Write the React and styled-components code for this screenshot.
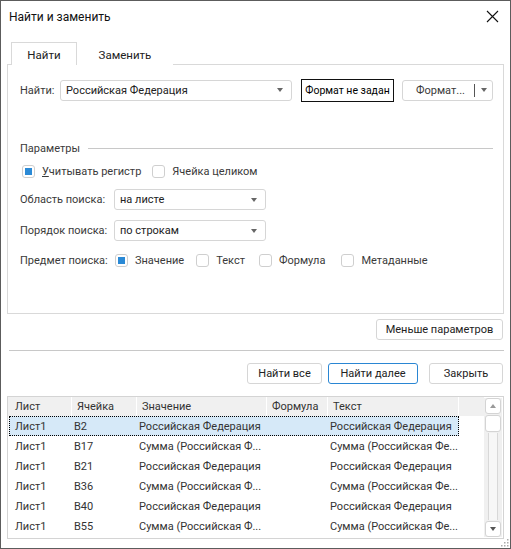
import styled, { createGlobalStyle } from "styled-components";

const GlobalStyle = createGlobalStyle`
  html, body {
    margin: 0;
    padding: 0;
    background: #3a3a3a;
  }
  body {
    font-family: Roboto, "Noto Sans", sans-serif;
    font-size: 11px;
    color: #3a3a3a;
  }
  * {
    box-sizing: border-box;
  }
`;

const Dialog = styled.div`
  width: 511px;
  height: 549px;
  background: #fff;
  border: 1px solid #5c5c5c;
  display: flex;
  flex-direction: column;
  position: relative;
`;

const TitleBar = styled.div`
  height: 31px;
  display: flex;
  align-items: center;
  justify-content: space-between;
  padding: 0 8px 0 8px;
  color: #111;
  font-size: 12px;
`;

const CloseButton = styled.button`
  border: none;
  background: none;
  padding: 0;
  width: 16px;
  height: 16px;
  display: flex;
  align-items: center;
  justify-content: center;
  margin-right: 2px;
`;

const Body = styled.div`
  padding: 0 6px 0 6px;
  display: flex;
  flex-direction: column;
`;

const Tabs = styled.div`
  display: flex;
  margin-top: 10px;
  padding-left: 4px;
  position: relative;
  z-index: 1;
  margin-bottom: -1px;
`;

const Tab = styled.div`
  height: 23px;
  width: ${(p) => (p.$active ? "66px" : "96px")};
  display: flex;
  align-items: center;
  justify-content: center;
  padding-top: 1px;
  background: #fff;
  border: 1px solid ${(p) => (p.$active ? "#d9d9d9" : "transparent")};
  border-bottom: none;
  color: #222;
  font-size: 11.5px;
`;

const Panel = styled.div`
  height: 250px;
  border: 1px solid #d9d9d9;
  padding: 14px 10px 0 12px;
  display: flex;
  flex-direction: column;
`;

const Row = styled.div`
  display: flex;
  align-items: center;
  height: ${(p) => p.$h || 14}px;
  margin-top: ${(p) => p.$mt || 0}px;
`;

const Label = styled.span`
  width: ${(p) => (p.$w ? `${p.$w}px` : "auto")};
  flex-shrink: 0;
  white-space: nowrap;
`;

const Combo = styled.div`
  width: ${(p) => p.$w}px;
  height: 21px;
  border: 1px solid #d6d6d6;
  border-radius: 3px;
  display: flex;
  align-items: center;
  justify-content: space-between;
  padding: 0 8px 0 5px;
  color: #222;
  background: #fff;
`;

const Arrow = styled.span`
  width: 0;
  height: 0;
  border-left: 3.5px solid transparent;
  border-right: 3.5px solid transparent;
  border-top: 4px solid #666;
`;

const FormatBox = styled.div`
  margin-left: 9px;
  width: 93px;
  height: 23px;
  border: 1px solid #111;
  display: flex;
  align-items: center;
  justify-content: center;
  font-size: 10.5px;
  color: #000;
`;

const SplitButton = styled.div`
  margin-left: 8px;
  width: 91px;
  height: 21px;
  border: 1px solid #d6d6d6;
  border-radius: 3px;
  display: flex;
  align-items: center;
`;

const SplitMain = styled.span`
  flex: 1;
  text-align: center;
  padding-left: 4px;
`;

const SplitDrop = styled.span`
  width: 18px;
  height: 13px;
  border-left: 1px solid #555;
  display: flex;
  align-items: center;
  justify-content: center;
`;

const SectionHeader = styled.div`
  display: flex;
  align-items: center;
  gap: 8px;
  height: 14px;
  margin-top: 40px;
  &::after {
    content: "";
    flex: 1;
    height: 1px;
    background: #c8c8c8;
  }
`;

const Check = styled.span`
  width: 13px;
  height: 13px;
  border: 1px solid #cfcfcf;
  border-radius: 3px;
  background: #fff;
  margin-left: ${(p) => p.$ml || 0}px;
  margin-right: 7px;
  flex-shrink: 0;
  display: flex;
  align-items: center;
  justify-content: center;
  &::after {
    content: "";
    width: 7px;
    height: 7px;
    background: ${(p) => (p.$checked ? "#2b8ad6" : "transparent")};
  }
`;

const Underline = styled.span`
  text-decoration: underline;
`;

const RightRow = styled.div`
  display: flex;
  justify-content: flex-end;
  margin-top: ${(p) => p.$mt}px;
  padding-right: ${(p) => p.$pr || 0}px;
`;

const Button = styled.button`
  font: inherit;
  color: #222;
  height: 21px;
  width: ${(p) => p.$w}px;
  margin-left: ${(p) => p.$ml || 0}px;
  background: #fff;
  border: 1px solid ${(p) => (p.$primary ? "#2a86d3" : "#d6d6d6")};
  border-radius: 3px;
  padding: 0;
`;

const Separator = styled.div`
  height: 1px;
  background: #c8c8c8;
  margin: 10px 0 0 2px;
`;

const Grid = styled.div`
  margin-top: 12px;
  height: 143px;
  border: 1px solid #d4d4d4;
  display: flex;
  position: relative;
`;

const GridBody = styled.div`
  flex: 1;
  display: flex;
  flex-direction: column;
`;

const HeaderRow = styled.div`
  display: flex;
  height: 19px;
  background: #f0f0f0;
`;

const HeaderCell = styled.div`
  width: ${(p) => p.$w}px;
  flex-shrink: 0;
  padding-left: ${(p) => (p.$first ? 7 : 5)}px;
  display: flex;
  align-items: center;
  border-right: 1px solid #fff;
  color: #333;
  &:last-child {
    flex: 1;
    border-right: none;
  }
`;

const DataRow = styled.div`
  display: flex;
  height: 20px;
  margin-left: 1px;
  width: 450px;
  background: ${(p) => (p.$selected ? "#d6e9f8" : "transparent")};
  outline: ${(p) => (p.$selected ? "1px dotted #000" : "none")};
  outline-offset: -1px;
`;

const Cell = styled.div`
  width: ${(p) => p.$w}px;
  flex-shrink: 0;
  padding-left: ${(p) => (p.$first ? 6 : 2)}px;
  display: flex;
  align-items: center;
  white-space: nowrap;
  overflow: hidden;
  color: #333;
`;

const ScrollBar = styled.div`
  width: 18px;
  margin: 1px 1px 1px 0;
  background: #f0f0f0;
  display: flex;
  flex-direction: column;
  align-items: center;
  padding: 0 1px;
`;

const ScrollBtn = styled.div`
  width: 16px;
  height: 16px;
  background: #fff;
  border: 1px solid #d4d4d4;
  border-radius: 3px;
  display: flex;
  align-items: center;
  justify-content: center;
  flex-shrink: 0;
`;

const Thumb = styled.div`
  width: 16px;
  height: 17px;
  margin-top: 1px;
  background: #fff;
  border: 1px solid #d4d4d4;
  border-radius: 3px;
`;

const Track = styled.div`
  flex: 1;
  width: 10px;
  border-left: 1px solid #d8d8d8;
  border-right: 1px solid #d8d8d8;
  background: #f7f7f7;
  margin: 1px 0;
`;

const UpArrow = styled.span`
  width: 0;
  height: 0;
  border-left: 3px solid transparent;
  border-right: 3px solid transparent;
  border-bottom: 4px solid #999;
`;

const DownArrow = styled.span`
  width: 0;
  height: 0;
  border-left: 3px solid transparent;
  border-right: 3px solid transparent;
  border-top: 4px solid #555;
`;

const Grip = styled.svg`
  position: absolute;
  right: 1px;
  bottom: 1px;
`;

const columns = [
  { key: "sheet", title: "Лист", w: 64 },
  { key: "cell", title: "Ячейка", w: 65 },
  { key: "value", title: "Значение", w: 130 },
  { key: "formula", title: "Формула", w: 61 },
  { key: "text", title: "Текст", w: 131 },
];

const fullName = "Российская Федерация";
const sumValue = "Сумма (Российская Ф...";
const sumText = "Сумма (Российская Фе...";

const rows = [
  { cell: "B2", value: fullName, text: fullName },
  { cell: "B17", value: sumValue, text: sumText },
  { cell: "B21", value: fullName, text: fullName },
  { cell: "B36", value: sumValue, text: sumText },
  { cell: "B40", value: fullName, text: fullName },
  { cell: "B55", value: sumValue, text: sumText },
];

function App() {
  return (
    <>
      <GlobalStyle />
      <Dialog>
        <TitleBar>
          <span>Найти и заменить</span>
          <CloseButton>
            <svg width="13" height="13" viewBox="0 0 13 13">
              <path d="M1 1L12 12M12 1L1 12" stroke="#111" strokeWidth="1.1" />
            </svg>
          </CloseButton>
        </TitleBar>

        <Body>
          <Tabs>
            <Tab $active>Найти</Tab>
            <Tab>Заменить</Tab>
          </Tabs>

          <Panel>
            <Row $h={22}>
              <Label $w={40}>Найти:</Label>
              <Combo $w={232}>
                <span>Российская Федерация</span>
                <Arrow />
              </Combo>
              <FormatBox>Формат не задан</FormatBox>
              <SplitButton>
                <SplitMain>Формат...</SplitMain>
                <SplitDrop>
                  <Arrow />
                </SplitDrop>
              </SplitButton>
            </Row>

            <SectionHeader>Параметры</SectionHeader>

            <Row $mt={9}>
              <Check $checked $ml={2} />
              <span>
                <Underline>У</Underline>читывать регистр
              </span>
              <Check $ml={11} />
              <span>Ячейка целиком</span>
            </Row>

            <Row $h={21} $mt={11}>
              <Label $w={94}>Область поиска:</Label>
              <Combo $w={152}>
                <span>на листе</span>
                <Arrow />
              </Combo>
            </Row>

            <Row $h={21} $mt={10}>
              <Label $w={94}>Порядок поиска:</Label>
              <Combo $w={152}>
                <span>по строкам</span>
                <Arrow />
              </Combo>
            </Row>

            <Row $mt={12}>
              <Label $w={95}>Предмет поиска:</Label>
              <Check $checked />
              <span>Значение</span>
              <Check $ml={12} />
              <span>Текст</span>
              <Check $ml={14} />
              <span>Формула</span>
              <Check $ml={16} />
              <span>Метаданные</span>
            </Row>
          </Panel>

          <RightRow $mt={5} $pr={1}>
            <Button $w={127}>Меньше параметров</Button>
          </RightRow>

          <Separator />

          <RightRow $mt={12} $pr={1}>
            <Button $w={75}>Найти все</Button>
            <Button $w={90} $ml={6} $primary>
              Найти далее
            </Button>
            <Button $w={74} $ml={11}>
              Закрыть
            </Button>
          </RightRow>

          <Grid>
            <GridBody>
              <HeaderRow>
                {columns.map((c, i) => (
                  <HeaderCell key={c.key} $w={c.w} $first={i === 0}>
                    {c.title}
                  </HeaderCell>
                ))}
                <HeaderCell />
              </HeaderRow>
              {rows.map((r, i) => (
                <DataRow key={r.cell} $selected={i === 0}>
                  <Cell $w={63} $first>
                    Лист1
                  </Cell>
                  <Cell $w={65}>{r.cell}</Cell>
                  <Cell $w={130}>{r.value}</Cell>
                  <Cell $w={61}></Cell>
                  <Cell $w={130}>{r.text}</Cell>
                </DataRow>
              ))}
            </GridBody>
            <ScrollBar>
              <ScrollBtn>
                <UpArrow />
              </ScrollBtn>
              <Thumb />
              <Track />
              <ScrollBtn>
                <DownArrow />
              </ScrollBtn>
            </ScrollBar>
          </Grid>
        </Body>

        <Grip width="9" height="9" viewBox="0 0 9 9">
          {[
            [7, 1],
            [4, 4],
            [7, 4],
            [1, 7],
            [4, 7],
            [7, 7],
          ].map(([x, y]) => (
            <rect key={`${x}-${y}`} x={x} y={y} width="1.5" height="1.5" fill="#aaa" />
          ))}
        </Grip>
      </Dialog>
    </>
  );
}

export default App;
